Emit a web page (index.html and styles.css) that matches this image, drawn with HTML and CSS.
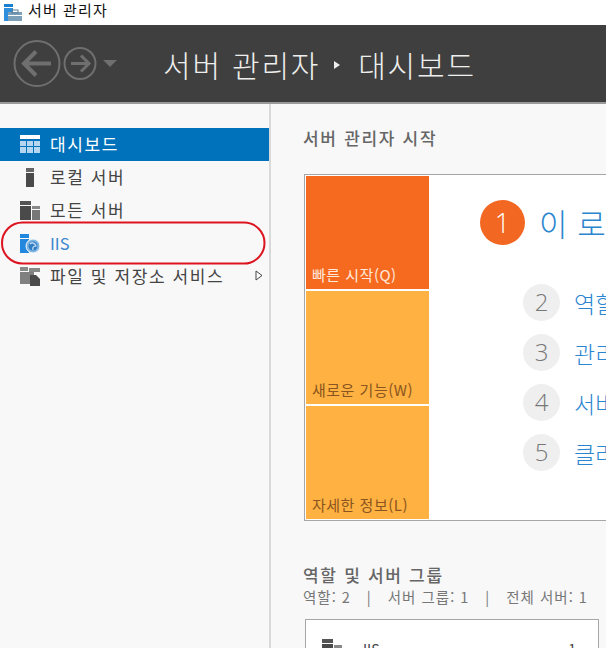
FILE: index.html
```html
<!DOCTYPE html>
<html lang="ko">
<head>
<meta charset="utf-8">
<title>서버 관리자</title>
<link rel="stylesheet" href="styles.css">
</head>
<body>
<div class="app">
  <div class="titlebar">
    <svg class="app-icon" width="21" height="19" viewBox="0 0 21 19">
      <rect x="3" y="1" width="9" height="3" fill="#1b7fd0"/>
      <rect x="3" y="5" width="9" height="13" fill="#2f8fdc"/>
      <rect x="7" y="9" width="14" height="9" fill="#7ba0b8"/>
      <rect x="11" y="7" width="6" height="3" fill="none" stroke="#5d7f96"/>
      <rect x="7" y="12" width="14" height="1" fill="#fff"/>
    </svg>
    <span class="titlebar-text">서버 관리자</span>
  </div>
  <header class="header">
    <div class="nav">
      <svg width="104" height="50" viewBox="0 0 104 50" fill="none" stroke="#6f6f6f">
        <circle cx="24" cy="24.5" r="22.5" stroke-width="2"/>
        <path d="M11 24.5H38M23 12.5L11 24.5L23 36.5" stroke-width="4"/>
        <circle cx="67" cy="24.5" r="15.5" stroke-width="2"/>
        <path d="M58 24.5H76M68 16.5L76 24.5L68 32.5" stroke-width="3"/>
        <path d="M90 21H104L97 28Z" fill="#6f6f6f" stroke="none"/>
      </svg>
    </div>
    <div class="crumb">서버 관리자<span class="crumb-sep"></span>대시보드</div>
  </header>
  <div class="body">
    <aside class="sidebar">
      <div class="row row-active">
        <svg class="row-icon" width="20" height="18" viewBox="0 0 20 18">
          <rect width="20" height="4" fill="#fff"/>
          <g fill="#b5d6ee">
            <rect y="6" width="6" height="5"/><rect x="7" y="6" width="6" height="5"/><rect x="14" y="6" width="6" height="5"/>
            <rect y="12" width="6" height="6"/><rect x="7" y="12" width="6" height="6"/><rect x="14" y="12" width="6" height="6"/>
          </g>
        </svg>
        <span>대시보드</span>
      </div>
      <div class="row">
        <svg class="row-icon" width="20" height="20" viewBox="0 0 20 20">
          <rect x="6" y="1" width="8" height="4" fill="#666"/>
          <rect x="6" y="6" width="8" height="14" fill="#4a4a4a"/>
        </svg>
        <span>로컬 서버</span>
      </div>
      <div class="row">
        <svg class="row-icon" width="20" height="20" viewBox="0 0 20 20">
          <rect y="1" width="11" height="4" fill="#555"/>
          <rect y="6" width="11" height="14" fill="#4a4a4a"/>
          <rect x="12" y="6" width="8" height="3" fill="#888"/>
          <rect x="12" y="10" width="8" height="10" fill="#777"/>
        </svg>
        <span>모든 서버</span>
      </div>
      <div class="row row-iis">
        <svg class="row-icon" width="20" height="20" viewBox="0 0 20 20">
          <rect y="1" width="9" height="4" fill="#2288dd"/>
          <rect y="6" width="9" height="14" fill="#2288dd"/>
          <circle cx="13" cy="13" r="7" fill="#7fb6e2" stroke="#f4f8fb" stroke-width="1"/>
          <circle cx="13" cy="13" r="4.5" fill="#2f7dc4"/>
          <path d="M10 11C12 9 15 10 16 13C14 13 12 14 13 17" fill="none" stroke="#cfe3f3" stroke-width="1.2"/>
        </svg>
        <span>IIS</span>
      </div>
      <div class="row">
        <svg class="row-icon" width="20" height="20" viewBox="0 0 20 20">
          <rect y="1" width="8" height="4" fill="#888"/>
          <rect x="9" y="2" width="11" height="4" fill="#888"/>
          <rect y="6" width="14" height="12" fill="#808080"/>
          <path d="M10 9H16L20 13V20H10Z" fill="#4a4a4a"/>
        </svg>
        <span class="row-label">파일 및 저장소 서비스</span>
        <svg class="row-arrow" width="8" height="11" viewBox="0 0 8 11">
          <path d="M1 1L7 5.5L1 10Z" fill="#fff" stroke="#444"/>
        </svg>
      </div>
      <svg class="highlight" width="266" height="44" viewBox="0 0 266 44">
        <rect x="2" y="1.5" width="262.5" height="41" rx="20.5" fill="none" stroke="#dc1420" stroke-width="2"/>
      </svg>
    </aside>
    <main class="main">
      <h2 class="section-title">서버 관리자 시작</h2>
      <div class="panel">
        <div class="tiles">
          <div class="tile tile-primary">빠른 시작(Q)</div>
          <div class="tile">새로운 기능(W)</div>
          <div class="tile">자세한 정보(L)</div>
        </div>
        <div class="steps">
          <div class="step-main">
            <span class="badge-main">1</span>
            <span class="step-main-text">이 로컬 서버 구성</span>
          </div>
          <ul class="step-list">
            <li class="step"><span class="badge">2</span><span class="step-text">역할 및 기능 추가</span></li>
            <li class="step"><span class="badge">3</span><span class="step-text">관리할 서버 추가</span></li>
            <li class="step"><span class="badge">4</span><span class="step-text">서버 그룹 만들기</span></li>
            <li class="step"><span class="badge">5</span><span class="step-text">클라우드 서비스에 연결</span></li>
          </ul>
        </div>
      </div>
      <h2 class="section-title section-roles">역할 및 서버 그룹</h2>
      <p class="summary">역할: 2<span class="pipe">|</span>서버 그룹: 1<span class="pipe">|</span>전체 서버: 1</p>
      <div class="card">
        <svg width="20" height="20" viewBox="0 0 20 20">
          <rect width="11" height="4" fill="#555"/>
          <rect y="5" width="11" height="15" fill="#4a4a4a"/>
          <rect x="12" y="6" width="8" height="14" fill="#888"/>
        </svg>
        <span class="card-name">IIS</span>
        <span class="card-count">1</span>
      </div>
    </main>
  </div>
</div>
</body>
</html>
```

FILE: styles.css
```css
* { box-sizing: border-box; }
html, body { margin: 0; padding: 0; }
body {
  width: 606px;
  height: 648px;
  overflow: hidden;
  font-family: "Noto Sans CJK KR", "Open Sans", sans-serif;
  background: #f8f8f8;
}
.app { width: 606px; height: 648px; display: flex; flex-direction: column; overflow: hidden; }

.titlebar {
  height: 25px;
  flex: none;
  background: #fff;
  display: flex;
  align-items: center;
  padding-left: 1px;
}
.app-icon { margin-right: 6px; }
.titlebar-text { font-size: 15px; letter-spacing: 1.1px; color: #111; line-height: 20px; position: relative; top: -3px; }

.header {
  height: 79px;
  flex: none;
  background: #3f3f3f;
  border-bottom: 2px solid #9a9a9a;
  display: flex;
  align-items: center;
  padding-left: 13px;
}
.nav { width: 150px; height: 50px; flex: none; }
.crumb {
  font-size: 30px;
  font-weight: 300;
  letter-spacing: 1.8px;
  color: #eee;
  line-height: 40px;
  display: flex;
  align-items: center;
}
.crumb-sep {
  width: 0;
  height: 0;
  margin: 3px 18px 0 14px;
  border-left: 6px solid #eee;
  border-top: 4px solid transparent;
  border-bottom: 4px solid transparent;
}

.body { flex: 1; display: flex; min-height: 0; }
.sidebar {
  width: 271px;
  flex: none;
  padding-top: 24px;
  border-right: 2px solid #d9d9d9;
  position: relative;
  background: #f8f8f8;
}
.row {
  height: 33px;
  display: flex;
  align-items: center;
  padding: 0 0 2px 20px;
  font-size: 17px;
  color: #444;
  letter-spacing: 1.6px;
}
.row-icon { margin-right: 10px; flex: none; }
.row-active { background: #0072bc; color: #fff; width: 269px; }
.row-iis { color: #3a87cf; letter-spacing: 0; font-size: 16.5px; }
.row-label { flex: 1; }
.row-arrow { margin-right: 6px; }
.highlight { position: absolute; left: 0; top: 117px; }

.main { flex: 1; padding: 23px 0 0 32px; min-width: 0; overflow: hidden; }
.section-title {
  margin: 0;
  font-size: 17px;
  font-weight: 500;
  letter-spacing: 1.7px;
  color: #666;
  line-height: 22px;
}
.panel {
  width: 400px;
  height: 347px;
  margin: 25px 0 0 1px;
  background: #fff;
  border: 1px solid #a6a6a6;
  padding: 1px 0 0 1px;
  display: flex;
}
.tiles { width: 123px; flex: none; display: flex; flex-direction: column; gap: 2px; }
.tile {
  height: 113px;
  background: #ffb141;
  color: #8a5520;
  font-size: 15px;
  letter-spacing: 0.5px;
  line-height: 18px;
  padding: 0 0 5px 6px;
  display: flex;
  align-items: flex-end;
  white-space: nowrap;
}
.tile-primary { background: #f66a20; color: #ffe8dc; }
.steps { padding: 24px 0 0 51px; white-space: nowrap; }
.step-main { display: flex; align-items: center; height: 45px; }
.badge-main {
  width: 45px;
  height: 45px;
  border-radius: 50%;
  background: #f26722;
  color: #fff;
  font-size: 27px;
  font-weight: 300;
  font-family: "Open Sans", sans-serif;
  display: flex;
  align-items: center;
  justify-content: center;
}
.step-main-text { margin-left: 14px; font-size: 31px; font-weight: 300; letter-spacing: 0.5px; color: #2b86cf; }
.step-list { list-style: none; margin: 39px 0 0 43px; padding: 0; display: flex; flex-direction: column; gap: 13px; }
.step { display: flex; align-items: center; height: 37px; }
.badge {
  width: 37px;
  height: 37px;
  border-radius: 50%;
  background: #efefef;
  color: #777;
  font-size: 24px;
  font-weight: 300;
  line-height: 34px;
  padding-bottom: 2px;
  font-family: "Open Sans", sans-serif;
  display: flex;
  align-items: center;
  justify-content: center;
}
.step-text { margin-left: 14px; font-size: 23px; font-weight: 300; color: #2b86cf; }

.section-roles { margin-top: 43px; }
.summary { margin: 2px 0 0; font-size: 14.5px; letter-spacing: 1px; line-height: 18px; color: #777; white-space: nowrap; }
.pipe { margin: 0 16px; }
.card {
  width: 294px;
  height: 60px;
  margin: 13px 0 0 2px;
  background: #fff;
  border: 1px solid #a6a6a6;
  padding: 19px 22px 0 16px;
  display: flex;
  align-items: flex-start;
  font-size: 14px;
  color: #444;
}
.card-name { margin-left: 21px; }
.card-count { margin-left: auto; }
```
